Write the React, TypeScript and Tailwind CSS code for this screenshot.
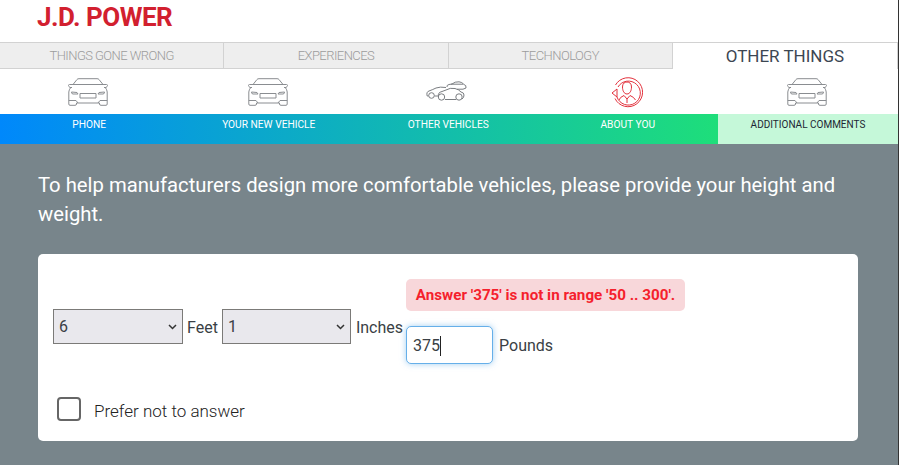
import React from 'react';

const CarFront: React.FC = () => (
  <svg width="40" height="28" viewBox="0 0 40 28" fill="none" stroke="#8a8d91" strokeWidth="1" className="block">
    <path d="M5 6.5 9 1.5Q9.5.7 11 .7H29Q30.5.7 31 1.5L35 6.5H5" />
    <path d="M5 6.5H1.5Q.5 6.5.5 7.5Q.5 8.5 2 9.5H4" />
    <path d="M35 6.5H38.5Q39.5 6.5 39.5 7.5Q39.5 8.5 38 9.5H36" />
    <path d="M3 9Q.8 12 .8 14V26Q.8 27.3 2 27.3H7Q8.5 27.3 8.5 26V25H31.5V26Q31.5 27.3 33 27.3H38Q39.2 27.3 39.2 26V14Q39.2 12 37 9" />
    <path d="M3.5 14 9 14.5 10 16H5Q3.5 16 3.5 14ZM36.5 14 31 14.5 30 16H35Q36.5 16 36.5 14Z" />
    <path d="M12 15.5H28V20H12Z" />
    <path d="M.8 22.5H8L10 25M39.2 22.5H32L30 25" />
  </svg>
);

const CarsSide: React.FC = () => (
  <svg width="42" height="21" viewBox="0 0 42 21" fill="none" stroke="#7a7d81" strokeWidth="1" className="block">
    <path d="M21 6Q20.5 4 23 3.5L26 3Q29 .5 33 .8Q36 1 38 3.5Q40.5 4 40 7L37 8.2" />
    <path d="M31 8.2H37M25 3.2H37" />
    <path d="M2.5 15H1.2Q0 11 3 10Q7 8.5 10 7Q14 5.5 20 6.5" />
    <path d="M8.5 15H12" />
    <path d="M12.5 15.5Q11.5 11.5 16 10.5L20 9Q24 6.5 29 7.5Q33 8.5 35 11Q38 11.5 38 14Q38 17 36 18" />
    <path d="M30 18.5H19" />
    <circle cx="5.5" cy="14.5" r="2.8" />
    <circle cx="15.5" cy="16" r="3.2" />
    <circle cx="33" cy="16" r="3.2" />
  </svg>
);

const PersonCycle: React.FC = () => (
  <svg width="32" height="32" viewBox="0 0 32 32" fill="none" stroke="#e3313c" strokeWidth="1" className="block">
    <path d="M4.5 9A14.5 14.5 0 1 1 4 22.5" />
    <path d="M7 11A12 12 0 1 1 6 21" />
    <path d="M1 17 6 13 6 21Z" />
    <path d="M11.5 11C11.5 7.5 13.5 6 16 6S20.5 7.5 20.5 11C20.5 14.5 19 18 16 18S11.5 14.5 11.5 11Z" />
    <path d="M8 24Q9 21 13 19.5L16 23 19 19.5Q23 21 24.5 24" />
    <path d="M16 23V27" />
  </svg>
);

const tabs = ['THINGS GONE WRONG', 'EXPERIENCES', 'TECHNOLOGY'];

const App: React.FC = () => {
  return (
    <div className="w-[899px] h-[465px] overflow-hidden bg-white font-['Roboto',sans-serif] border-r border-r-[#333]">
      <header className="h-[42px] pl-[37px] pt-[3px]">
        <span className="block text-[26px] leading-[28px] font-bold text-[#d2202f] tracking-[-0.5px]">J.D. POWER</span>
      </header>

      <nav className="flex h-[27px]">
        {tabs.map((t) => (
          <div key={t} className="w-[224.3px] flex items-center justify-center pt-[1px] bg-[#eeeeee] border-t border-b border-r border-[#d2d2d2] text-[13px] font-light tracking-[-0.55px] text-[#9c9c9c]">
            {t}
          </div>
        ))}
        <div className="flex-1 flex items-center justify-center pt-[1px] border-t border-r border-[#d2d2d2] text-[17px] text-[#3c4652]">OTHER THINGS</div>
      </nav>

      <div className="grid grid-cols-5 h-[45px]">
        <div className="flex items-center justify-center pr-[4px]"><CarFront /></div>
        <div className="flex items-center justify-center pr-[3px]"><CarFront /></div>
        <div className="flex items-center justify-center pr-[3px]"><CarsSide /></div>
        <div className="flex items-center justify-center pr-[3px]"><PersonCycle /></div>
        <div className="flex items-center justify-center pr-[3px]"><CarFront /></div>
      </div>

      <div className="flex h-[30px] text-[10.2px] leading-[21px]">
        <div className="w-[718px] grid grid-cols-4 bg-linear-to-r/srgb from-[#0088fb] to-[#1ede7a] text-white">
          {['PHONE', 'YOUR NEW VEHICLE', 'OTHER VEHICLES', 'ABOUT YOU'].map((s) => (
            <div key={s} className="text-center pr-[1px]">{s}</div>
          ))}
        </div>
        <div className="flex-1 text-center bg-[#c5f8d9] text-[#1c2733] text-[10px]">ADDITIONAL COMMENTS</div>
      </div>

      <main className="h-[321px] bg-[#78858b] pl-[38px] pr-[40px] pt-[27px]">
        <p className="text-[20.25px] leading-[29px] text-white w-[820px]">
          To help manufacturers design more comfortable vehicles, please provide your height and weight.
        </p>
        <section className="mt-[25px] h-[187px] bg-white rounded-[5px] pl-[15px] pt-[25px] text-[#3a3f45]">
          <div className="flex items-start">
            <div className="flex items-center mt-[30px]">
              <div className="w-[130px] h-[35px] flex items-center justify-between bg-[#e9e8ed] border border-[#7b7a78] pl-[5px] pr-[5px] text-[16px]">
                6
                <svg width="9" height="6" viewBox="0 0 9 6" fill="none" stroke="#333" strokeWidth="1.5"><path d="M1 1l3.5 3.5L8 1" /></svg>
              </div>
              <span className="mx-[4px] pt-[2px] text-[16px]">Feet</span>
              <div className="w-[129px] h-[35px] flex items-center justify-between bg-[#e9e8ed] border border-[#7b7a78] pl-[5px] pr-[5px] text-[16px]">
                1
                <svg width="9" height="6" viewBox="0 0 9 6" fill="none" stroke="#333" strokeWidth="1.5"><path d="M1 1l3.5 3.5L8 1" /></svg>
              </div>
              <span className="ml-[5px] mr-[3px] pt-[2px] text-[16px]">Inches</span>
            </div>
            <div className="flex flex-col">
              <div className="w-[279px] h-[32px] flex items-center justify-center bg-[#f8d7da] rounded-[5px] text-[15.2px] font-bold text-[#f51f2d]">
                Answer '375' is not in range '50 .. 300'.
              </div>
              <div className="flex items-center mt-[15px]">
                <div className="w-[87px] h-[38px] flex items-center pl-[6px] pt-[1px] bg-white border border-[#66afe9] rounded-[5px] shadow-[0_0_6px_rgba(102,175,233,0.6)] text-[16px]">
                  375<span className="w-px h-[20px] bg-[#222]" />
                </div>
                <span className="ml-[6px] pt-[1px] text-[16px]">Pounds</span>
              </div>
            </div>
          </div>
          <label className="flex items-start mt-[33px] ml-[4px]">
            <span className="w-[24px] h-[24px] rounded-[4px] border-2 border-[#666]" />
            <span className="ml-[13px] mt-[1px] text-[17px] leading-[26px] font-light text-[#222]">Prefer not to answer</span>
          </label>
        </section>
      </main>
    </div>
  );
};

export default App;
